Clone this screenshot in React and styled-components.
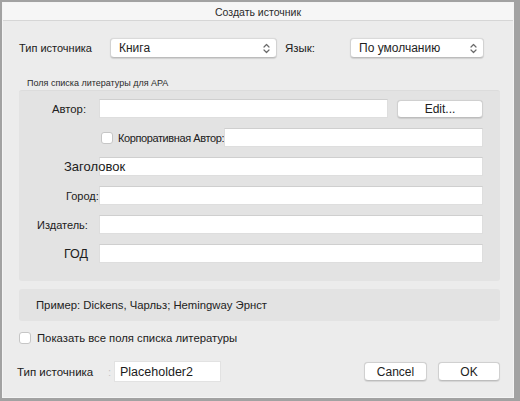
import React from 'react'
import styled, { createGlobalStyle } from 'styled-components';

const GlobalStyle = createGlobalStyle`
  html, body {
    margin: 0;
    padding: 0;
    background: #a2a2a2;
  }
  body {
    font-family: "Liberation Sans", Arial, sans-serif;
    color: #222;
  }
`;

const Dialog = styled.div`
  width: 512px;
  height: 396px;
  margin: 2px 0 0 2px;
  background: #ececec;
  border: 1px solid #f4f4f4;
  box-sizing: border-box;
  display: flex;
  flex-direction: column;
`;

const TitleBar = styled.div`
  height: 17px;
  background: #f6f6f6;
  border-bottom: 1px solid #d6d6d6;
  display: flex;
  align-items: center;
  justify-content: center;
  font-size: 10.5px;
  color: #2a2a2a;
  flex-shrink: 0;
`;

const Body = styled.div`
  flex: 1;
  display: flex;
  flex-direction: column;
  padding: 17px 13px 0 16px;
`;

const TopRow = styled.div`
  display: flex;
  align-items: center;
  height: 20px;
`;

const Label = styled.span`
  font-size: ${p => p.$size || 12}px;
  width: ${p => p.$width ? p.$width + 'px' : 'auto'};
  padding-left: ${p => p.$indent || 0}px;
  box-sizing: border-box;
  flex-shrink: 0;
  white-space: nowrap;
  color: #202020;
`;

const Select = styled.div`
  width: ${p => p.$width}px;
  height: 20px;
  box-sizing: border-box;
  background: #fff;
  border-radius: 4px;
  border: 1px solid #d2d2d2;
  border-top-color: #dadada;
  border-bottom-color: #bcbcbc;
  box-shadow: 0 0.5px 1px rgba(0, 0, 0, 0.12);
  display: flex;
  align-items: center;
  justify-content: space-between;
  padding: 0 6px 0 8px;
  font-size: 12px;
  color: #1e1e1e;
`;

const Chevron = () => (
  <svg width="7" height="11" viewBox="0 0 7 11">
    <path d="M1 4 L3.5 1.5 L6 4 M1 7 L3.5 9.5 L6 7" fill="none" stroke="#6a6a6a" strokeWidth="1.2" strokeLinecap="round" strokeLinejoin="round" />
  </svg>
);

const GroupCaption = styled.div`
  font-size: 9px;
  color: #2a2a2a;
  margin: 20px 0 0 8px;
  height: 11px;
  line-height: 11px;
`;

const Group = styled.div`
  margin-top: 1px;
  width: 481px;
  background: #e3e3e3;
  border-radius: 3px;
  border-top: 1px solid #dcdcdc;
  box-sizing: border-box;
  padding: 8px 17px 18px 0;
  display: flex;
  flex-direction: column;
  gap: 10px;
`;

const FieldRow = styled.div`
  display: flex;
  align-items: center;
  height: 19px;
`;

const FieldLabel = styled.span`
  width: 80px;
  flex-shrink: 0;
  box-sizing: border-box;
  padding-left: ${p => p.$indent}px;
  font-size: ${p => p.$size || 11.5}px;
  white-space: nowrap;
  overflow: visible;
  position: relative;
  z-index: 1;
  color: #202020;
`;

const TextField = styled.div`
  flex: ${p => p.$width ? '0 0 ' + p.$width + 'px' : '1'};
  height: 19px;
  background: #fff;
  box-sizing: border-box;
  border: 1px solid #dedede;
  border-top-color: #cfcfcf;
`;

const Button = styled.div`
  width: ${p => p.$width}px;
  height: ${p => p.$height || 19}px;
  box-sizing: border-box;
  background: #fff;
  border-radius: 4px;
  border: 1px solid #d0d0d0;
  border-bottom-color: #bdbdbd;
  box-shadow: 0 0.5px 1px rgba(0, 0, 0, 0.1);
  display: flex;
  align-items: center;
  justify-content: center;
  font-size: 12px;
  color: #222;
  flex-shrink: 0;
`;

const CheckBox = styled.span`
  width: 12px;
  height: 12px;
  box-sizing: border-box;
  background: #fff;
  border: 1px solid #c6c6c6;
  border-radius: 3px;
  flex-shrink: 0;
  margin-left: ${p => p.$offset || 0}px;
  margin-right: ${p => p.$gap || 5}px;
`;

const CorpLabel = styled.span`
  font-size: 11px;
  letter-spacing: -0.4px;
  white-space: nowrap;
  color: #202020;
`;

const Example = styled.div`
  margin-top: 8px;
  width: 481px;
  height: 32px;
  box-sizing: border-box;
  background: #e3e3e3;
  border-radius: 3px;
  display: flex;
  align-items: center;
  padding-left: 17px;
  font-size: 11.3px;
  color: #222;
`;

const CheckRow = styled.div`
  margin-top: 11px;
  display: flex;
  align-items: center;
  height: 12px;
  font-size: 11.3px;
  color: #202020;
`;

const BottomRow = styled.div`
  margin-top: 17px;
  margin-left: -2px;
  display: flex;
  align-items: center;
  height: 21px;
`;

const Colon = styled.span`
  font-size: 11px;
  color: #c4c4c4;
  width: 6px;
  margin-left: 16px;
`;

const SourceInput = styled.div`
  width: 107px;
  height: 21px;
  box-sizing: border-box;
  background: #fff;
  border: 1px solid #e2e2e2;
  display: flex;
  align-items: center;
  padding-left: 5px;
  font-size: 12.5px;
  color: #1c1c1c;
`;

const Buttons = styled.div`
  margin-left: auto;
  display: flex;
  gap: 11px;
`;

const fields = [
  { label: 'Заголовок', indent: 45, size: 13 },
  { label: 'Город:', indent: 47, size: 11 },
  { label: 'Издатель:', indent: 18, size: 11 },
  { label: 'ГОД', indent: 45, size: 12.5 },
];

function App() {
  return (
    <>
      <GlobalStyle />
      <Dialog>
        <TitleBar>Создать источник</TitleBar>
        <Body>
          <TopRow>
            <Label $size={11} $width={91}>Тип источника</Label>
            <Select $width={167}>Книга<Chevron /></Select>
            <Label $size={11.5} $width={73} $indent={8}>Язык:</Label>
            <Select $width={134}>По умолчанию<Chevron /></Select>
          </TopRow>

          <GroupCaption>Поля списка литературы для APA</GroupCaption>
          <Group>
            <FieldRow>
              <FieldLabel $indent={33} $size={11.3}>Автор:</FieldLabel>
              <TextField $width={289} />
              <div style={{ width: 9 }} />
              <Button $width={86} $height={18}>Edit...</Button>
            </FieldRow>
            <FieldRow>
              <CheckBox $offset={82} />
              <CorpLabel>Корпоративная Автор:</CorpLabel>
              <TextField />
            </FieldRow>
            {fields.map(f => (
              <FieldRow key={f.label}>
                <FieldLabel $indent={f.indent} $size={f.size}>{f.label}</FieldLabel>
                <TextField />
              </FieldRow>
            ))}
          </Group>

          <Example>Пример: Dickens, Чарльз; Hemingway Эрнст</Example>

          <CheckRow>
            <CheckBox $gap={6} />
            Показать все поля списка литературы
          </CheckRow>

          <BottomRow>
            <Label $size={11.5} $width={75}>Тип источника</Label>
            <Colon>:</Colon>
            <SourceInput>Placeholder2</SourceInput>
            <Buttons>
              <Button $width={63}>Cancel</Button>
              <Button $width={62}>OK</Button>
            </Buttons>
          </BottomRow>
        </Body>
      </Dialog>
    </>
  )
}

export default App
